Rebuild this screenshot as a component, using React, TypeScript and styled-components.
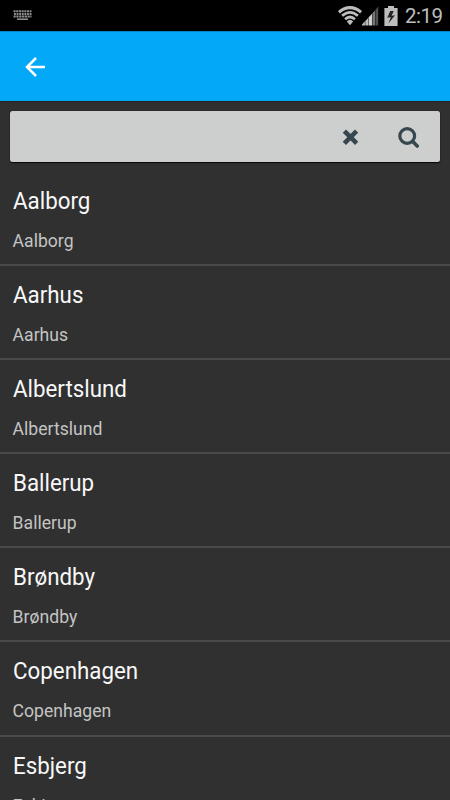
import React from "react";
import styled, { createGlobalStyle } from "styled-components";

const GlobalStyle = createGlobalStyle`
  * { box-sizing: border-box; }
  body { margin: 0; background: #303030; overflow: hidden; }
`;

const Screen = styled.div`
  display: flex;
  flex-direction: column;
  width: 450px;
  height: 800px;
  overflow: hidden;
  background: #303030;
  font-family: Roboto, sans-serif;
`;

const StatusBar = styled.header`
  display: flex;
  flex: none;
  align-items: center;
  height: 31px;
  padding: 0 8px 0 13px;
  background: #000;
`;

const StatusIcons = styled.div`
  display: flex;
  align-items: center;
  margin-left: auto;
`;

const BatterySlot = styled.span`
  display: flex;
  margin-left: 5px;
`;

const Clock = styled.span`
  width: 37px;
  margin-left: 7px;
  padding-top: 2px;
  color: #bdbdbd;
  font-size: 20.5px;
  letter-spacing: -0.5px;
  line-height: 31px;
  white-space: nowrap;
`;

const AppBar = styled.nav`
  display: flex;
  flex: none;
  align-items: center;
  height: 71px;
  padding-left: 25px;
  background: #03a9f7;
  border-top: 1px solid #0587c5;
  border-bottom: 1px solid #23221e;
`;

const IconButton = styled.button`
  display: flex;
  padding: 0;
  border: 0;
  background: none;
  color: inherit;
`;

const SearchBox = styled.div`
  display: flex;
  flex: none;
  align-items: center;
  height: 51px;
  margin: 9px 10px 0;
  padding-right: 20px;
  gap: 39px;
  border-radius: 2.5px;
  background: #cdcfce;
  color: #37474f;
  box-shadow: 0 1px 1px #080808, 0 0 1px #111;
`;

const SearchInput = styled.input`
  flex: 1;
  min-width: 0;
  height: 100%;
  padding: 0 12px;
  border: 0;
  outline: 0;
  background: none;
  font: 20px Roboto, sans-serif;
`;

const CityList = styled.ul`
  flex: none;
  margin: 9.8px 0 0;
  padding: 0;
  list-style: none;
`;

const CityRow = styled.li`
  height: 94.13px;
  padding: 13px 13px 0 12.6px;
  border-bottom: 2px solid #4a4a4a;
`;

const CityName = styled.div`
  color: #f8f8f8;
  font-size: 23.5px;
  line-height: 32px;
  transform: scaleX(0.95);
  transform-origin: left center;
`;

const CityRegion = styled.div`
  margin-top: 11px;
  color: #c4c4c4;
  font-size: 17.6px;
  line-height: 26px;
`;

const cities = ["Aalborg", "Aarhus", "Albertslund", "Ballerup", "Brøndby", "Copenhagen", "Esbjerg"];

const KeyboardIcon = () => (
  <svg width="19" height="11" viewBox="0 0 19 11" fill="none" stroke="#8b8b8b">
    <path d="M.5 1.2h18" strokeWidth="2" strokeDasharray="2.1 .6" />
    <path d="M1 3.9h17.5" strokeWidth="2" strokeDasharray="1.9 .7" />
    <path d="M.5 6.5h18" strokeWidth="2" strokeDasharray="2.3 .5" />
    <path d="M4 9.2h11" strokeWidth="1.6" />
  </svg>
);

const WifiIcon = () => (
  <svg width="24" height="20" viewBox="0 0 24 20" fill="none" stroke="#bdbdbd">
    <path d="M.9 6.2Q12-3 23.1 6.2" strokeWidth="3.1" />
    <path d="M4.1 9.8Q12 2.9 19.9 9.8" strokeWidth="2.8" />
    <path d="M7.1 13.2Q12 8.7 16.9 13.2" strokeWidth="2.8" />
    <path d="M8.8 15.4Q12 12.3 15.2 15.4L12 19.3z" fill="#bdbdbd" stroke="none" />
  </svg>
);

const SignalIcon = () => (
  <svg width="17" height="20" viewBox="0 0 17 20">
    <path d="M-1 19.5 2.9 15.3V19.5z" fill="#bdbdbd" />
    <path d="M3.3 15 6.4 11.8V19.5H3.3z" fill="#bdbdbd" />
    <path d="M6.8 11.3 10 7.8V19.5H6.8z" fill="#cfcfcf" />
    <path d="M10.4 7.3 13 4.4V19.5H10.4z" fill="#777" />
    <path d="M13.4 3.9 16.2.6V19.5H13.4z" fill="#505050" />
  </svg>
);

const BatteryIcon = () => (
  <svg width="14" height="20" viewBox="0 0 14 20">
    <path d="M4 0h6v2h3.6v18H.4V2H4z" fill="#bdbdbd" />
    <path d="M6.2 5 3.2 11.8l3.6-.6-2.4 6.2L11 9.2l-3.4.6L9.8 5z" fill="#242424" />
  </svg>
);

const BackIcon = () => (
  <svg width="20" height="20" viewBox="0 0 20 20" fill="none" stroke="#fff" strokeWidth="2.5">
    <path d="M20 10H2M11 1 2 10l9 9" />
  </svg>
);

const ClearIcon = () => (
  <svg width="17" height="16" viewBox="0 0 17 16" fill="none" stroke="currentColor">
    <path d="M4 3.7 13 12.7M13 3.7 4 12.7" strokeWidth="4.6" strokeLinecap="square" />
    <path d="M5.5 8.2 8.5 5.2l3 3-3 3z" fill="currentColor" stroke="none" />
  </svg>
);

const SearchIcon = () => (
  <svg width="22" height="22" viewBox="0 0 22 22" fill="none" stroke="currentColor" strokeWidth="3.2">
    <circle cx="9.2" cy="10" r="7.4" />
    <path d="m15 15.8 4.2 4.2" strokeLinecap="round" strokeWidth="3.6" />
  </svg>
);

export default function App() {
  return (
    <Screen>
      <GlobalStyle />
      <StatusBar>
        <KeyboardIcon />
        <StatusIcons>
          <WifiIcon />
          <SignalIcon />
          <BatterySlot><BatteryIcon /></BatterySlot>
          <Clock>2:19</Clock>
        </StatusIcons>
      </StatusBar>
      <AppBar>
        <IconButton aria-label="Back"><BackIcon /></IconButton>
      </AppBar>
      <SearchBox>
        <SearchInput aria-label="Search" />
        <IconButton aria-label="Clear"><ClearIcon /></IconButton>
        <IconButton aria-label="Search"><SearchIcon /></IconButton>
      </SearchBox>
      <CityList>
        {cities.map((city) => (
          <CityRow key={city}>
            <CityName>{city}</CityName>
            <CityRegion>{city}</CityRegion>
          </CityRow>
        ))}
      </CityList>
    </Screen>
  );
}
